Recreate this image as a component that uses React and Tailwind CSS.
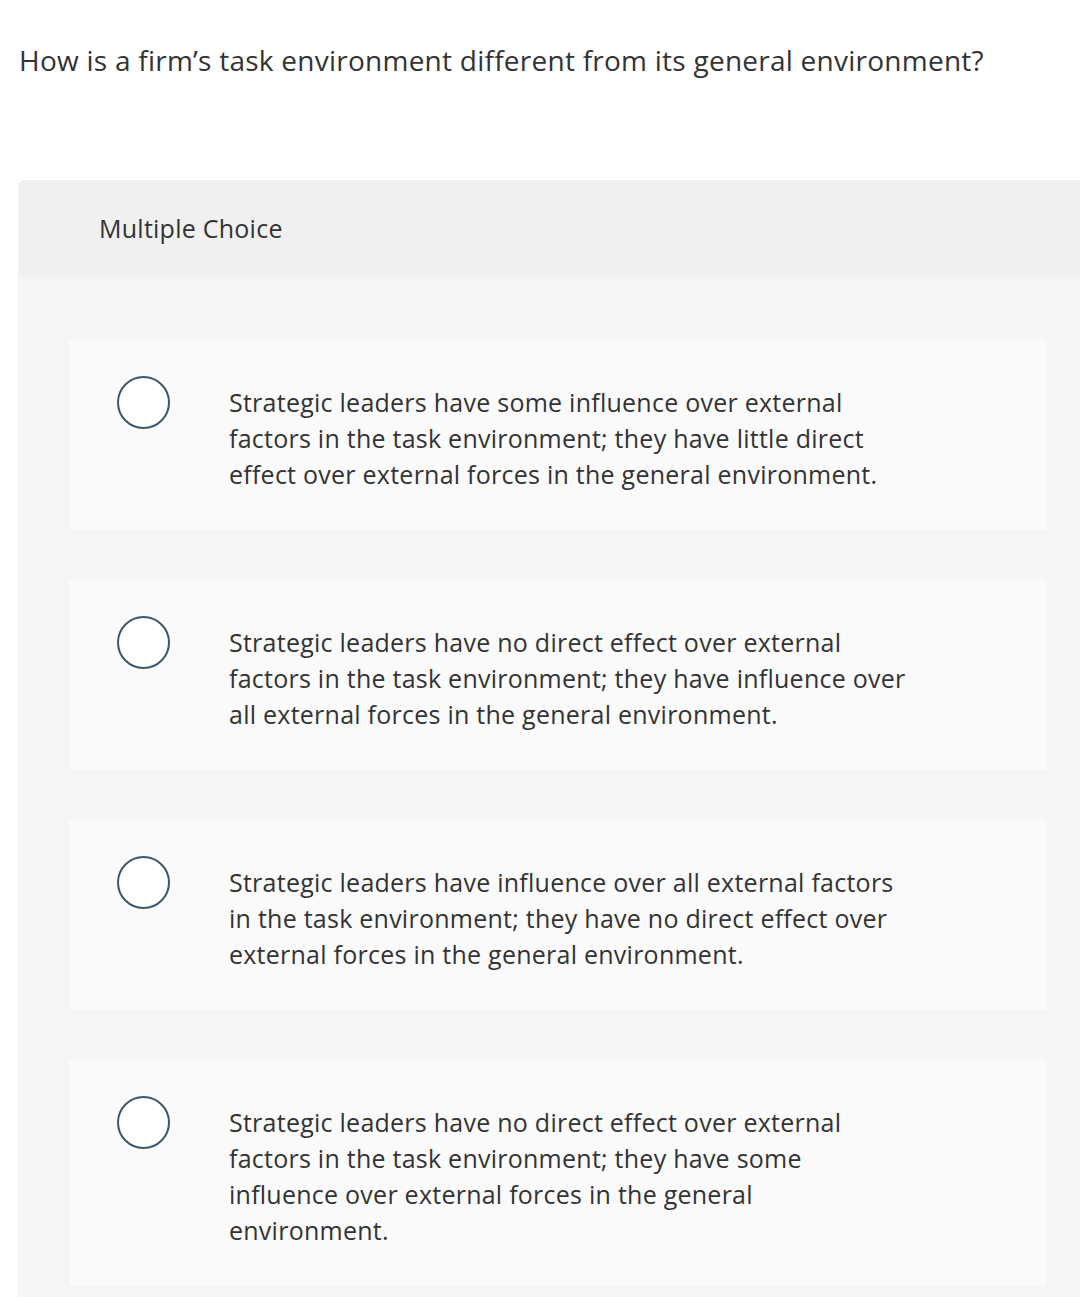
import React from "react";

const answers = [
  [
    "Strategic leaders have some influence over external",
    "factors in the task environment; they have little direct",
    "effect over external forces in the general environment.",
  ],
  [
    "Strategic leaders have no direct effect over external",
    "factors in the task environment; they have influence over",
    "all external forces in the general environment.",
  ],
  [
    "Strategic leaders have influence over all external factors",
    "in the task environment; they have no direct effect over",
    "external forces in the general environment.",
  ],
  [
    "Strategic leaders have no direct effect over external",
    "factors in the task environment; they have some",
    "influence over external forces in the general",
    "environment.",
  ],
];

const App = () => {
  return (
    <div className="w-[1080px] h-[1297px] overflow-hidden bg-white text-[#333] font-['Open_Sans',sans-serif] tracking-[0.25px]">
      {/* Question */}
      <div className="pl-[19px] pt-[41px] text-[28px] leading-[38px]">
        How is a firm’s task environment different from its general environment?
      </div>

      {/* Answer panel */}
      <div className="ml-[18px] mt-[101px] rounded-tl-[6px] overflow-hidden bg-[#f5f5f5] pb-[40px]">
        <div className="h-[97px] bg-[#f0f0f0] pl-[81px] flex items-center text-[25px]">
          Multiple Choice
        </div>

        <div className="pt-[62px] pl-[51px] pr-[33px] flex flex-col gap-[49px]">
          {answers.map((lines, i) => (
            <div
              key={i}
              className="bg-[#fafafa] rounded-[4px] pt-[37px] pb-[38px] pl-[48px] flex items-start"
            >
              <div className="w-[53px] h-[53px] shrink-0 rounded-full border-2 border-[#3b5670] bg-white" />
              <div className="ml-[59px] mt-[8px] text-[25px] leading-[36px]">
                {lines.map((line, j) => (
                  <div key={j} className="whitespace-nowrap">
                    {line}
                  </div>
                ))}
              </div>
            </div>
          ))}
        </div>
      </div>
    </div>
  );
};

export default App;
